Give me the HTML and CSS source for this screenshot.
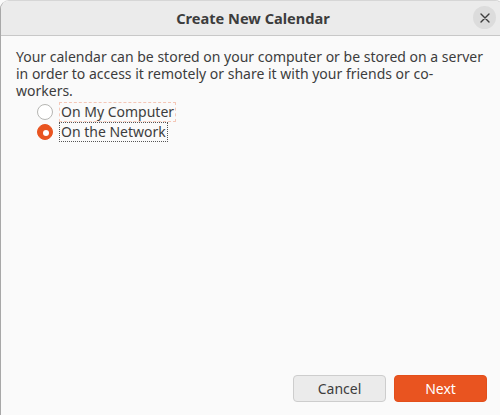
FILE: index.html
```html
<!DOCTYPE html>
<html>
<head>
<meta charset="utf-8">
<link rel="stylesheet" href="styles.css">
</head>
<body>
<div class="window">
  <header class="titlebar">
    <span class="title">Create New Calendar</span>
    <button class="close" aria-label="Close">
      <svg width="10" height="10" viewBox="0 0 10 10"><path d="M1 1L9 9M9 1L1 9" stroke="#3d3d3d" stroke-width="1.4" stroke-linecap="round"/></svg>
    </button>
  </header>
  <main class="content">
    <p class="intro">Your calendar can be stored on your computer or be stored on a server in order to access it remotely or share it with your friends or co-workers.</p>
    <div class="options">
      <label class="option">
        <span class="radio"></span>
        <span class="label hover">On My Computer</span>
      </label>
      <label class="option">
        <span class="radio checked"></span>
        <span class="label focused">On the Network</span>
      </label>
    </div>
  </main>
  <footer class="actions">
    <button class="btn cancel">Cancel</button>
    <button class="btn next">Next</button>
  </footer>
</div>
</body>
</html>
```
FILE: styles.css
```css
html, body {
  margin: 0;
  padding: 0;
  width: 500px;
  height: 415px;
  overflow: hidden;
  background: #fafafa;
}
body {
  font-family: "Noto Sans", "Open Sans", sans-serif;
  color: #3d3d3d;
}
.window {
  width: 504px;
  height: 420px;
  box-sizing: border-box;
  border-left: 1px solid #a8a8a8;
  border-top: 1px solid #d6d6d6;
  border-right: 1px solid #bdbdbd;
  border-radius: 9px 9px 0 0;
  background: #fafafa;
  display: flex;
  flex-direction: column;
  overflow: hidden;
}
.titlebar {
  height: 34px;
  flex: none;
  background: #ebebeb;
  border-bottom: 1px solid #c8c8c8;
  display: flex;
  align-items: center;
  justify-content: center;
  position: relative;
}
.title {
  font-weight: bold;
  font-size: 14.6px;
  color: #3d3d3d;
  margin-left: 2px;
}
.close {
  position: absolute;
  right: 7px;
  top: 5px;
  width: 23px;
  height: 23px;
  border-radius: 50%;
  border: none;
  background: #dcdcdc;
  padding: 0;
  display: flex;
  align-items: center;
  justify-content: center;
}
.content {
  flex: 1;
  padding: 12px 15px 0 15px;
}
.intro {
  margin: 0;
  font-size: 14px;
  line-height: 17px;
  width: 470px;
}
.options {
  display: flex;
  flex-direction: column;
  gap: 1px;
  padding-left: 21px;
  margin-top: 3px;
}
.option {
  display: flex;
  align-items: center;
  height: 19px;
}
.radio {
  width: 14px;
  height: 14px;
  border-radius: 50%;
  border: 1px solid #b6b6b3;
  background: #ffffff;
  flex: none;
  margin-right: 6px;
  box-sizing: content-box;
}
.radio.checked {
  border-color: #e95420;
  background: #e95420;
  position: relative;
}
.radio.checked::after {
  content: "";
  position: absolute;
  left: 5px;
  top: 5px;
  width: 6px;
  height: 6px;
  border-radius: 50%;
  background: #ffffff;
}
.label {
  font-size: 14px;
  padding: 0 1px;
  line-height: 18px;
  border: 1px solid transparent;
}
.label.focused {
  border: 1px dotted #555555;
}
.label.hover {
  border: 1px dashed rgba(233, 84, 32, 0.3);
}
.actions {
  flex: none;
  display: flex;
  justify-content: flex-end;
  gap: 8px;
  padding: 0 16px 18px 0;
}
.btn {
  width: 93px;
  height: 27px;
  border-radius: 4px;
  font-family: inherit;
  font-size: 14px;
  padding: 0;
}
.cancel {
  background: #ebebeb;
  border: 1px solid #cdcdcd;
  color: #3d3d3d;
}
.next {
  background: #e95420;
  border: 1px solid #e34f1b;
  color: #ffffff;
}
```
